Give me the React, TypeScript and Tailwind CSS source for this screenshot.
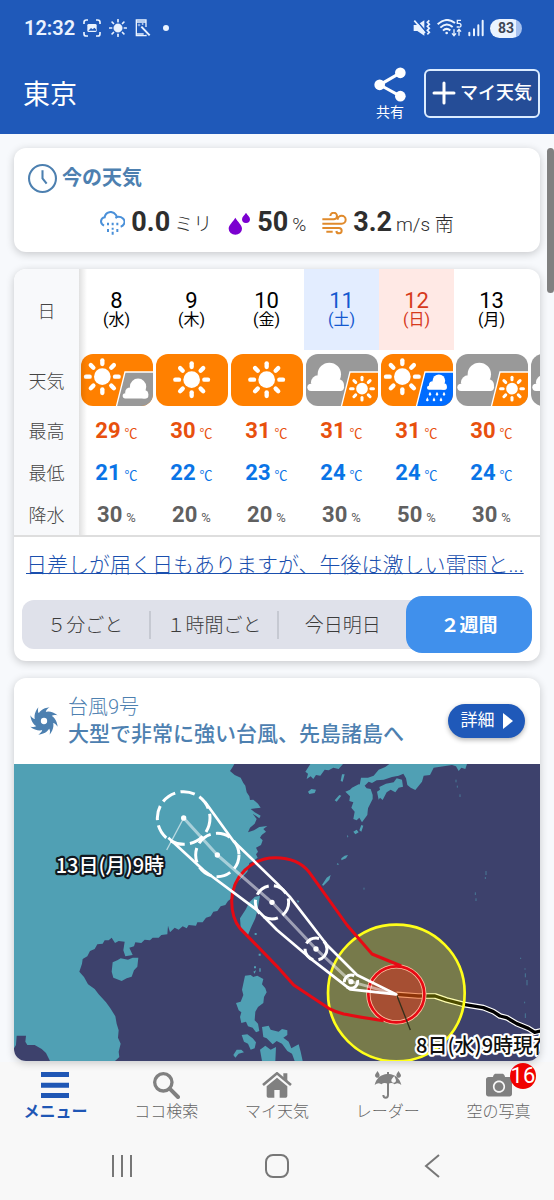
import type { ReactNode } from "react";
import { FaCamera } from "react-icons/fa";
import clsx from "clsx";

type Sky = "sun" | "sunCloud" | "cloudSun" | "sunRain";

type Day = {
  date: string;
  week: string;
  sky: Sky;
  high?: number;
  low?: number;
  rain?: number;
};

const DAYS: Day[] = [
  { date: "8", week: "(水)", sky: "sunCloud", high: 29, low: 21, rain: 30 },
  { date: "9", week: "(木)", sky: "sun", high: 30, low: 22, rain: 20 },
  { date: "10", week: "(金)", sky: "sun", high: 31, low: 23, rain: 20 },
  { date: "11", week: "(土)", sky: "cloudSun", high: 31, low: 24, rain: 30 },
  { date: "12", week: "(日)", sky: "sunRain", high: 31, low: 24, rain: 50 },
  { date: "13", week: "(月)", sky: "cloudSun", high: 30, low: 24, rain: 30 },
  { date: "", week: "", sky: "cloudSun" },
];

const TABS = ["５分ごと", "１時間ごと", "今日明日", "２週間"];

const RAYS = [0, 45, 90, 135, 180, 225, 270, 315];

const Sun = ({ x, y, scale = 1 }: { x: number; y: number; scale?: number }) => (
  <g transform={`translate(${x} ${y}) scale(${scale})`}>
    <circle r="25" fill="#fff" />
    {RAYS.map((deg) => (
      <path
        key={deg}
        d="M0 -38V-49"
        stroke="#fff"
        strokeWidth="13"
        strokeLinecap="round"
        transform={`rotate(${deg})`}
      />
    ))}
  </g>
);

const Cloud = ({ x, y, scale = 1 }: { x: number; y: number; scale?: number }) => (
  <g transform={`translate(${x} ${y}) scale(${scale})`} fill="#fff">
    <circle cx="66" cy="36" r="35" />
    <circle cx="32" cy="60" r="21" />
    <circle cx="92" cy="68" r="18" />
    <rect x="0" y="64" width="110" height="22" rx="11" />
  </g>
);

const SkyIcon = ({ sky }: { sky: Sky }) => {
  const base = sky === "cloudSun" ? "#999" : "#ff8000";
  const corner = { sun: "", sunCloud: "#999", cloudSun: "#ff8000", sunRain: "#006cff" }[sky];

  return (
    <svg viewBox="0 0 216 156" className="mx-auto block h-[52px] w-[72px] rounded-xl">
      <rect width="216" height="156" fill={base} />
      {corner && <path d="M132 54H222V162H105Z" fill={corner} stroke="#fff" strokeWidth="4" />}
      {sky === "sun" && <Sun x={107} y={77} />}
      {(sky === "sunCloud" || sky === "sunRain") && <Sun x={64} y={68} />}
      {sky === "sunCloud" && <Cloud x={125} y={73} scale={0.7} />}
      {sky === "cloudSun" && (
        <>
          <Cloud x={4} y={25} />
          <Sun x={168} y={104} scale={0.7} />
        </>
      )}
      {sky === "sunRain" && (
        <>
          <Cloud x={138} y={61} scale={0.54} />
          <path
            d="M147 113l4 8a4 4 0 1 1-8 0zM168 113l4 8a4 4 0 1 1-8 0zM189 113l4 8a4 4 0 1 1-8 0zM139 130l4 8a4 4 0 1 1-8 0zM159 130l4 8a4 4 0 1 1-8 0zM180 130l4 8a4 4 0 1 1-8 0z"
            fill="#fff"
          />
        </>
      )}
    </svg>
  );
};

const StatusBar = () => (
  <div className="flex h-14 items-center justify-between pr-8 pl-6 text-[#eaf3ff]">
    <div className="flex items-center gap-2">
      <span className="font-[Roboto] text-xl font-semibold">12:32</span>
      <svg viewBox="0 0 54 54" className="h-[18px] w-[18px]" fill="none" stroke="currentColor" strokeWidth="5">
        <path d="M3 15V10Q3 3 10 3H15M39 3H44Q51 3 51 10V15M51 39V44Q51 51 44 51H39M15 51H10Q3 51 3 44V39" />
        <rect x="13" y="15" width="28" height="24" rx="4" fill="currentColor" stroke="none" />
        <path d="M16 35l8-8 5 4 5-5 5 5v4z" fill="#1f59b9" stroke="none" />
      </svg>
      <svg viewBox="-27 -27 54 54" className="h-[18px] w-[18px]" fill="currentColor" stroke="currentColor">
        <circle r="13" />
        {RAYS.map((deg) => (
          <path key={deg} d="M0 -19V-25" strokeWidth="5" strokeLinecap="round" transform={`rotate(${deg})`} />
        ))}
      </svg>
      <svg viewBox="0 0 48 54" className="h-[18px] w-4" fill="none" stroke="currentColor" strokeWidth="4">
        <path d="M33 24V3H4V50H33V47M4 9H33M4 45H26" />
        <path d="M19 23L44 49" strokeWidth="6" />
        <path d="M12 14v8M8 18h8M23 12v6M20 15h6" strokeWidth="2" />
      </svg>
      <span className="ml-1 h-1.5 w-1.5 rounded-full bg-[#eaf3ff]" />
    </div>
    <div className="flex items-center gap-1.5">
      <svg viewBox="0 0 54 54" className="h-[18px] w-[18px]" fill="currentColor">
        <path d="M2 18H12L34 4V50L13 36H2Z" />
        <path d="M9 3L42 42" stroke="#1f59b9" strokeWidth="5" />
        <path d="M4 5L36 42" stroke="currentColor" strokeWidth="5" />
        <path
          d="M49 4l-6 6 6 6-6 6 6 6-6 6 6 6-6 6"
          fill="none"
          stroke="currentColor"
          strokeWidth="5"
        />
      </svg>
      <svg viewBox="0 0 75 54" className="h-[18px] w-[25px]" fill="none" stroke="currentColor" strokeWidth="6">
        <path d="M2 16Q28 -8 54 12M10 26Q28 8 47 24M18 35Q28 25 40 34" />
        <circle cx="29" cy="42" r="4" fill="currentColor" stroke="none" />
        <path d="M72 4H61V13H66Q72 13 72 19T65 24H59" strokeWidth="4" />
        <path d="M51 31V49M45 43l6 7 6-7M66 50V32M60 38l6-7 6 7" strokeWidth="4" />
      </svg>
      <svg viewBox="0 0 48 54" className="h-[18px] w-4" stroke="currentColor" strokeWidth="6" strokeLinecap="round">
        <path d="M4 41V49M18 31V49M31 19V49M44 5V49" />
      </svg>
      <span className="flex h-[19px] w-8 items-center justify-center rounded-full bg-linear-to-r from-[#eaf3ff] from-80% to-[#a6c1ee] to-80% font-[Roboto] text-sm font-bold text-[#3d4654]">
        83
      </span>
    </div>
  </div>
);

const TopBar = () => (
  <header className="bg-[#1f59b9] text-white">
    <StatusBar />
    <div className="flex h-[78px] items-center justify-between pr-3.5 pl-[23px]">
      <h1 className="text-[27px]">東京</h1>
      <div className="flex items-center gap-[18px] pb-1">
        <button className="flex flex-col items-center gap-0.5">
          <svg viewBox="0 0 96 104" className="h-[35px] w-8" fill="currentColor">
            <path d="M79 17L17 53L79 87" fill="none" stroke="currentColor" strokeWidth="9" />
            <circle cx="79" cy="17" r="16" />
            <circle cx="17" cy="53" r="16" />
            <circle cx="79" cy="87" r="16" />
          </svg>
          <span className="text-sm leading-4">共有</span>
        </button>
        <button className="flex h-[49px] w-[116px] items-center justify-center gap-1 rounded-md border-2 border-[#dcecff] bg-[#254d97]">
          <svg viewBox="0 0 24 24" className="h-6 w-6" stroke="currentColor" strokeWidth="3" strokeLinecap="round">
            <path d="M12 2V22M2 12H22" />
          </svg>
          <span className="text-lg font-medium">マイ天気</span>
        </button>
      </div>
    </div>
  </header>
);

const Card = ({ children }: { children: ReactNode }) => (
  <section className="overflow-hidden rounded-xl bg-white shadow-[0_2px_8px_rgba(0,0,0,0.2)]">
    {children}
  </section>
);

const Value = ({ value, unit, icon }: { value: string; unit: string; icon: ReactNode }) => (
  <div className="flex items-center gap-1.5">
    {icon}
    <p className="flex items-baseline gap-1 text-[#2e2e2e]">
      <span className="font-[Roboto] text-[27px] leading-8 font-bold">{value}</span>
      <span className="text-[19px] leading-8 font-light">{unit}</span>
    </p>
  </div>
);

const NowCard = () => (
  <Card>
    <div className="px-3.5 pt-[15px] pb-[13px]">
      <h2 className="flex h-[30px] items-center gap-[5px] text-xl font-bold text-[#4d80b0]">
        <svg viewBox="0 0 28 28" className="h-[29px] w-[29px]" fill="none" stroke="currentColor" strokeWidth="2">
          <circle cx="14" cy="14" r="13" />
          <path d="M14 6V14L18 19" />
        </svg>
        今の天気
      </h2>
      <div className="mt-3.5 flex h-8 items-center justify-center gap-4">
        <Value
          value="0.0"
          unit="ミリ"
          icon={
            <svg viewBox="0 0 75 75" className="h-[25px] w-[25px]" fill="none" stroke="#4a90d9" strokeWidth="6">
              <path d="M12 44C-2 36 2 21 14 19C16 2 38 -3 48 12C50 15 50 19 47 22M47 19C66 13 78 28 72 39Q69 45 62 47" />
              <path d="M24 35v8M38 35v8M52 35v8M24 54v9M38 50v6M38 62v9M52 54v9" />
            </svg>
          }
        />
        <Value
          value="50"
          unit="%"
          icon={
            <svg viewBox="0 0 69 69" className="h-[23px] w-[23px]" fill="#7b00d0">
              <path d="M22 17C29 30 42 38 42 50A20 18 0 0 1 2 50C2 38 15 30 22 17Z" />
              <path d="M54 2C58 9 66 14 66 22A12 11 0 0 1 42 22C42 14 50 9 54 2Z" />
            </svg>
          }
        />
        <Value
          value="3.2"
          unit="m/s 南"
          icon={
            <svg viewBox="0 0 75 69" className="h-[23px] w-[25px]" fill="none" stroke="#e08a2c" strokeWidth="6">
              <path d="M1 22H35A10 10 0 1 0 25 12M1 35H59A12 12 0 1 0 47 23M1 48H51A8 8 0 1 1 43 57M13 59H32" />
            </svg>
          }
        />
      </div>
    </div>
  </Card>
);

const headTint = (week: string) =>
  clsx(
    "p-0 text-center font-normal",
    week === "(土)" && "bg-[#e3edff] text-[#1459cf]",
    week === "(日)" && "bg-[#ffe9e5] text-[#d63a1c]",
    week !== "(土)" && week !== "(日)" && "text-black"
  );

// the gradient strip hangs over the first day so the label column looks raised
const RowHead = ({ children }: { children: ReactNode }) => (
  <th
    scope="row"
    className="relative bg-[#f8f9fb] p-0 pt-1 text-center text-lg font-light text-[#444] after:absolute after:inset-y-0 after:left-full after:w-2 after:bg-linear-to-r after:from-black/12 after:to-transparent"
  >
    {children}
  </th>
);

const NumberRow = ({
  label,
  values,
  unit,
  color,
}: { label: string; values: (number | undefined)[]; unit: string; color: string }) => (
  <tr className="h-[42px]">
    <RowHead>{label}</RowHead>
    {values.map((v, i) => (
      <td key={i} className={clsx("p-0 pt-1 text-center", color)}>
        {v !== undefined && (
          <span className="inline-flex items-baseline gap-1">
            <span className="font-[Roboto] text-[22px] leading-7 font-bold">{v}</span>
            <span className="text-[13px] leading-7">{unit}</span>
          </span>
        )}
      </td>
    ))}
  </tr>
);

const WeekCard = () => (
  <Card>
    <div className="overflow-hidden border-b-2 border-[#dedede]">
      <table className="w-[590px] table-fixed border-collapse">
        <colgroup>
          <col className="w-[65px]" />
        </colgroup>
        <thead>
          <tr className="h-[81px]">
            <RowHead>日</RowHead>
            {DAYS.map((d, i) => (
              <th key={i} scope="col" className={headTint(d.week)}>
                <span className="block font-[Roboto] text-[22px] leading-5">{d.date}</span>
                <span className="block text-base leading-[18px]">{d.week}</span>
              </th>
            ))}
          </tr>
        </thead>
        <tbody>
          <tr className="h-[59px]">
            <RowHead>天気</RowHead>
            {DAYS.map((d, i) => (
              <td key={i} className="p-0">
                <SkyIcon sky={d.sky} />
              </td>
            ))}
          </tr>
          <NumberRow label="最高" values={DAYS.map((d) => d.high)} unit="℃" color="text-[#e8500e]" />
          <NumberRow label="最低" values={DAYS.map((d) => d.low)} unit="℃" color="text-[#0a74e6]" />
          <NumberRow label="降水" values={DAYS.map((d) => d.rain)} unit="%" color="text-[#606060]" />
        </tbody>
      </table>
    </div>

    <a
      href="#comment"
      className="mx-3 mt-3 block text-[21px] leading-8 font-light whitespace-nowrap text-[#1a4fae] underline decoration-1 underline-offset-1"
    >
      日差しが届く日もありますが、午後は激しい雷雨と...
    </a>

    <div className="mx-2 mt-[15px] mb-2 flex h-[57px] items-center">
      <div className="flex h-[49px] flex-1 items-center rounded-l-xl bg-[#dfe1ea]">
        {TABS.slice(0, 3).map((tab, i) => (
          <button
            key={tab}
            className={clsx(
              "h-7 flex-1 text-[19px] leading-[30px] font-light text-[#3c3c3c]",
              i < 2 && "border-r-2 border-[#c6c9d2]"
            )}
          >
            {tab}
          </button>
        ))}
      </div>
      <div className="flex h-[49px] w-[126px] items-center rounded-r-xl bg-[#dfe1ea]">
        <button className="h-[57px] w-full shrink-0 rounded-2xl bg-[#4090ec] pt-1 text-[19px] font-bold text-white">
          {TABS[3]}
        </button>
      </div>
    </div>
  </Card>
);

const TyphoonIcon = () => (
  <svg viewBox="-42 -42 84 84" className="h-7 w-7 shrink-0" fill="#4d80b0">
    <circle r="17" fill="none" stroke="#4d80b0" strokeWidth="15" />
    {RAYS.map((deg) => (
      <path key={deg} d="M-19 -12C-18 -27 -4 -39 17 -41C6 -34 3 -28 8 -19Z" transform={`rotate(${deg})`} />
    ))}
  </svg>
);

// forecast positions, radius of the probability circle
const FORECAST = [
  [551, 189, 79],
  [652, 300, 65],
  [816, 442, 50],
  [948, 582, 33],
  [1053, 680, 20],
];

const LAND = [
  // continent
  "M42 27H703L698 36 690 48 704 60 722 68 730 84 736 92 740 112 748 124 750 135 760 134 774 146 782 158 768 160 752 162 764 172 782 182 778 190 758 176 770 192 764 206 750 218 744 232 762 226 778 216 802 213 790 222 798 230 785 240 780 248 788 256 783 270 768 278 774 290 768 298 773 308 760 318 748 324 742 350 722 372 700 390 706 402 692 416 697 428 684 438 676 450 662 454 652 468 640 470 632 484 618 488 608 502 592 502 588 512 566 510 560 520 548 514 536 524 524 518 510 532 504 512 502 538 484 540 476 548 458 548 450 556 434 554 424 564 406 562 402 574 388 578 398 600 376 604 370 586 374 560 356 558 345 564 335 548 326 556 314 556 308 566 292 568 284 582 270 588 262 604 248 612 246 626 238 650 252 666 264 688 284 702 296 718 318 742 330 758 346 784 350 806 356 826 354 848 362 866 356 890 358 906 345 918H150L138 894 125 882 104 870 82 870 76 860 78 842 50 842 48 870 42 880Z",
  // Hainan
  "M338 622L352 616 362 610 384 614 398 608 415 608 412 635 402 646 395 665 380 670 365 678 340 668 335 650Z",
  // Taiwan
  "M780 422L765 425 748 442 738 462 720 490 722 515 738 540 744 540 752 520 766 490 772 468Z",
  // Luzon and the islands south of it
  "M735 662L752 660 760 666 772 662 790 672 786 688 796 700 800 712 792 726 790 744 774 756 766 770 764 796 774 806 778 828 768 832 758 818 744 814 738 800 724 804 720 786 724 772 716 766 708 744 722 740 730 720 726 704Z",
  "M725 840L742 838 758 850 768 862 764 880 752 884 744 866 732 860Z",
  "M786 816L806 812 812 824 836 830 846 822 862 826 862 840 850 848 866 860 874 880 896 868 902 890 908 918H884L876 896 862 888 846 866 830 858 818 868 800 850 790 846Z",
  "M780 884L796 872 812 884 828 876 826 918H786Z",
  "M700 900l10-16 14 0 8 8-16 4-10 12z",
  // Kyushu
  "M1036 110L1050 104 1056 98 1076 88 1092 90 1100 100 1112 102 1118 120 1118 132 1104 160 1102 180 1086 202 1078 188 1070 196 1060 192 1064 170 1054 158 1060 142 1048 138 1050 124Z",
  // western Honshu
  "M1079 90L1083 68 1104 68 1121 62 1136 44 1156 36 1168 27H1401L1396 42 1384 38 1376 48 1368 34 1356 30 1331 34 1301 38 1290 60 1271 62 1266 80 1246 105 1232 98 1222 90 1218 70 1210 56 1196 62 1176 66 1151 74 1130 76 1116 84 1106 80 1094 92Z",
  // Shikoku
  "M1131 110L1140 104 1138 96 1158 86 1181 82 1190 70 1206 74 1209 95 1196 98 1186 112 1172 104 1160 112 1148 135 1140 128 1136 134Z",
  // Korea
  "M931 27H1029L1016 42 1000 38 986 46 974 44 961 62 948 60 940 72 932 64 920 72 924 56 916 50Z",
  "M924 110L934 102 948 104 944 114 928 117Z",
  "M1022 78l4-20 8 0-6 22zM1004 136l14-16 6 2-14 18zM1060 230l10-6 6 8-10 6zM1078 226l6-16 6 2-6 18z",
  "M1024 310l10-8 10-2-6 10-14 6zM966 390l14-22 12-8-4 14-18 18zM1042 240l3 4-3 4zM1010 328l4-4 2 6zM890 436l8 2-4 6z",
  "M762 634h6v6h-6zM778 640h4v10h-4zM760 650l8-4-4 10zM776 596h6v6h-6zM764 534h6v6h-6z",
];

const TyphoonMap = () => (
  <svg viewBox="42 27 1578 891" className="block w-full font-['Noto_Sans_CJK_JP',sans-serif]">
    <rect x="42" y="27" width="1578" height="891" fill="#3d416c" />
    <path d={LAND.join("")} fill="#50a0b4" />
    <path
      d="M1368 74v8M1372 92v6M1380 118v8M1458 348v12M1456 366v6M1426 412v8M1428 430v8M1092 398v6M1562 608v4M1575 640v4M1576 655v12M1581 675v16M1574 740v5M1576 775v14"
      stroke="#50a0b4"
      strokeOpacity="0.6"
      strokeWidth="3"
    />

    <g fill="none" strokeLinejoin="round">
      <path
        d="M1189 718L1255 723 1305 723 1340 735 1390 748 1450 758 1480 770 1500 783 1520 788 1550 806 1585 820 1604 832 1630 826"
        stroke="#fff"
        strokeWidth="17"
      />
      <path
        d="M1189 718L1255 723 1305 723 1340 735 1390 748 1450 758 1480 770 1500 783 1520 788 1550 806 1585 820 1604 832 1630 826"
        stroke="#000"
        strokeWidth="10"
      />
      <circle cx="1189" cy="714" r="205" fill="#ff0" fillOpacity="0.3" stroke="#ffff1a" strokeWidth="8" />
      <circle cx="1189" cy="718" r="84" fill="#e61414" fillOpacity="0.42" stroke="#ffc0a0" strokeWidth="13" />
      <circle cx="1189" cy="718" r="84" stroke="#e60a14" strokeWidth="8" />
      <path d="M1191 722L1231 825" stroke="#33301c" strokeWidth="4" />
      <path
        d="M1151 797C1100 790 1060 782 1031 777Q1005 770 986 760L881 690 831 634 720 520C700 495 695 460 695 437C697 365 755 308 826 308C870 308 905 322 928 352L1041 510 1116 597 1204 633"
        stroke="#e60a14"
        strokeWidth="9"
      />
      <path d="M551 189L500 285" stroke="#fff" strokeOpacity="0.6" strokeWidth="4" />
      <path d="M551 189L652 300 816 442 948 582 1053 680 1189 718" stroke="#fff" strokeOpacity="0.5" strokeWidth="9" />
      <path
        d="M616 142L700 258 831 385 869 425 981 570 1071 660 1189 718 1051 703 931 610 831 525 775 468 610 345 505 248"
        stroke="#fff"
        strokeWidth="8"
      />
      {FORECAST.map(([x, y, r]) => (
        <g key={x}>
          <circle cx={x} cy={y} r={r} stroke="#fff" strokeWidth="9" strokeDasharray="44 16" />
          <circle cx={x} cy={y} r="8" fill="#fff" />
        </g>
      ))}
    </g>

    <g fontSize="60" fontWeight="500" strokeLinejoin="round" className="[paint-order:stroke]">
      <text x="167" y="354" fill="#fff" stroke="#101820" strokeWidth="13">
        13日(月)9時
      </text>
      <text x="1248" y="893" fill="#101010" stroke="#fff" strokeWidth="13">
        8日(水)9時現在
      </text>
    </g>
  </svg>
);

const TyphoonCard = () => (
  <Card>
    <div className="flex h-[86px] items-center pr-[15px] pl-4">
      <TyphoonIcon />
      <div className="ml-2.5 flex-1 text-[#4d80b0]">
        <p className="text-xl leading-[27px] font-light">台風9号</p>
        <h2 className="text-[21px] leading-[27px] font-medium whitespace-nowrap">大型で非常に強い台風、先島諸島へ</h2>
      </div>
      <button className="flex h-[34px] w-[77px] shrink-0 items-center justify-center gap-2 rounded-full bg-[#1f59b9] text-[17px] text-white shadow-[0_2px_5px_rgba(0,0,0,0.3)]">
        詳細
        <svg viewBox="0 0 10 16" className="h-4 w-2.5" fill="currentColor">
          <path d="M0 0L10 8L0 16Z" />
        </svg>
      </button>
    </div>
    <TyphoonMap />
  </Card>
);

const NAV: { label: string; icon: ReactNode; badge?: number }[] = [
  {
    label: "メニュー",
    icon: (
      <svg viewBox="0 0 84 78" className="h-[26px] w-7" fill="currentColor">
        <path d="M0 0H84V15H0ZM0 32H84V47H0ZM0 63H84V78H0Z" />
      </svg>
    ),
  },
  {
    label: "ココ検索",
    icon: (
      <svg viewBox="0 0 81 81" className="h-[27px] w-[27px]" fill="none" stroke="currentColor">
        <circle cx="31" cy="31" r="26" strokeWidth="10" />
        <path d="M50 50L75 75" strokeWidth="12" strokeLinecap="round" />
      </svg>
    ),
  },
  {
    label: "マイ天気",
    icon: (
      <svg viewBox="0 0 90 78" className="h-[26px] w-[30px]" fill="currentColor">
        <path d="M3 39L45 4L87 39" fill="none" stroke="currentColor" strokeWidth="8" />
        <path d="M64 4H76V28L64 18Z" />
        <path d="M45 17L76 43V72Q76 77 71 77H53V54H37V77H19Q14 77 14 72V43Z" />
      </svg>
    ),
  },
  {
    label: "レーダー",
    icon: (
      <svg viewBox="0 0 84 84" className="h-7 w-7" fill="currentColor">
        <path d="M2 42C6 22 22 10 39 9V3H45V9C62 10 78 22 82 42Q72 32 62 40Q52 32 42 40Q32 32 22 40Q12 32 2 42Z" />
        <path d="M42 36V72Q42 80 35 80T28 72" fill="none" stroke="currentColor" strokeWidth="6" />
        <path d="M10 0C15 7 19 11 16 17A7 7 0 0 1 3 13C4 8 8 5 10 0ZM74 0C69 7 65 11 68 17A7 7 0 0 0 81 13C80 8 76 5 74 0Z" />
        <path d="M61 15C55 22 50 26 53 32A7 7 0 0 0 66 29C66 24 62 20 61 15Z" fill="#f8f8f8" />
      </svg>
    ),
  },
  { label: "空の写真", icon: <FaCamera className="h-[26px] w-[26px]" />, badge: 16 },
];

const BottomNav = () => (
  <footer className="bg-[#f8f8f8] text-[#808080]">
    <nav className="flex h-[69px]">
      {NAV.map((item, i) => (
        <button
          key={item.label}
          className={clsx(
            "relative flex flex-1 flex-col items-center pt-2 text-base leading-6",
            i === 0 ? "font-bold text-[#1f57b5]" : "font-light text-[#666]"
          )}
        >
          <span className={clsx("flex h-[30px] items-center", i > 0 && "text-[#808080]")}>{item.icon}</span>
          {item.label}
          {item.badge && (
            <span className="absolute top-px right-[18px] flex h-[26px] w-[26px] items-center justify-center rounded-full bg-[#f00000] font-[Roboto] text-[22px] font-normal text-white">
              {item.badge}
            </span>
          )}
        </button>
      ))}
    </nav>
    <div className="flex h-[69px] items-center justify-around px-11">
      <button aria-label="履歴">
        <svg viewBox="0 0 24 24" className="h-6 w-6" stroke="#777" strokeWidth="2">
          <path d="M3 1V23M12 1V23M21 1V23" />
        </svg>
      </button>
      <button aria-label="ホーム">
        <svg viewBox="0 0 24 24" className="h-6 w-6" fill="none" stroke="#777" strokeWidth="2">
          <rect x="1" y="1" width="22" height="22" rx="7" />
        </svg>
      </button>
      <button aria-label="戻る">
        <svg viewBox="0 0 24 24" className="h-6 w-6" fill="none" stroke="#777" strokeWidth="2">
          <path d="M19 1L6 12L19 23" />
        </svg>
      </button>
    </div>
  </footer>
);

const App = () => (
  <div className="flex min-h-screen flex-col bg-[#f7f9fc] font-[Roboto,'Noto_Sans_CJK_JP',sans-serif]">
    <TopBar />
    <main className="relative flex flex-1 flex-col gap-[17px] px-3.5 pt-3.5">
      <NowCard />
      <WeekCard />
      <TyphoonCard />
      <div className="absolute top-3.5 right-0 h-[145px] w-[7px] rounded-full bg-[#808080]" />
    </main>
    <BottomNav />
  </div>
);

export default App;
